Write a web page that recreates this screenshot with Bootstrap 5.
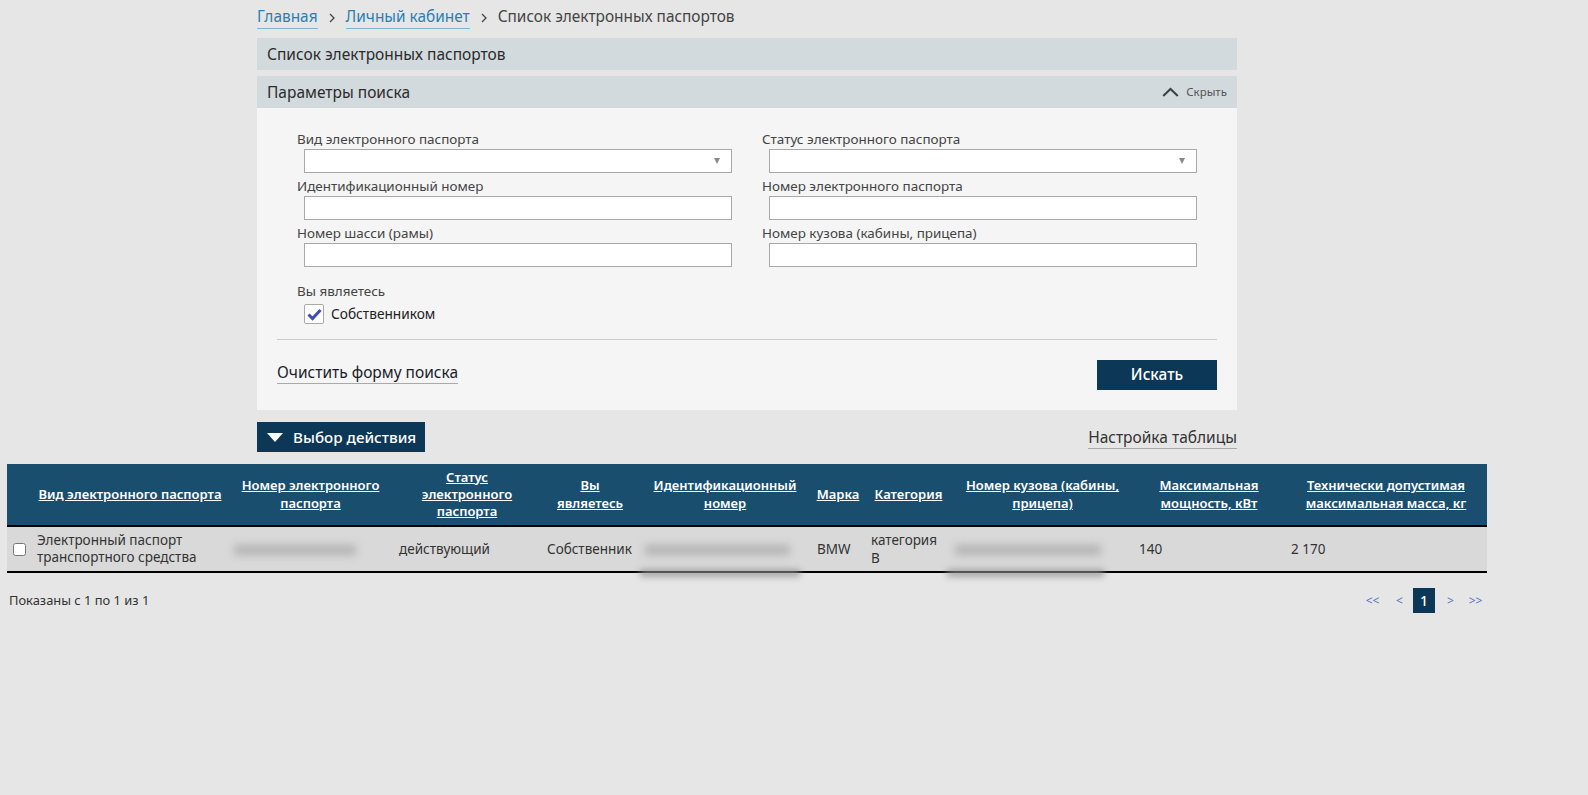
<!DOCTYPE html>
<html lang="ru">
<head>
<meta charset="utf-8">
<link href="https://cdn.jsdelivr.net/npm/bootstrap@5.3.0/dist/css/bootstrap.min.css" rel="stylesheet">
<style>
html,body{background:#e6e6e6;margin:0}
body{font-family:"Noto Sans","Open Sans",sans-serif;color:#333;font-size:13.5px;height:795px;overflow:hidden}
.wrap-main{width:980px;margin-left:257px}
.crumbs{height:38px;padding-top:6px;font-size:15.4px;line-height:22px;color:#444;gap:0}
.crumbs a{color:#2a7fb0;text-decoration:none;border-bottom:1px solid #7db4d6}
.crumbs .sep{width:28px;text-align:center}
.crumb-sep-svg{width:8px;height:10px}
.bar-head{height:32px;background:#d3dade;padding:2px 10px 0;font-size:15.5px;color:#2b2b2b}
.bar-head+.bar-head{margin-top:6px}
.hide-link{font-size:11.5px;color:#555;gap:7px;margin-top:-2px}
.panel-body{background:#f5f5f5;height:302px;padding:21px 20px 0}
.form-grid{display:grid;grid-template-columns:465px 465px;padding-left:1px}
.fld{height:47px;padding-left:19px}
.fld-label{font-size:13.45px;line-height:20px;height:20px;color:#444;padding-left:0}
.fld-box{display:block;margin-left:7px;width:428px;height:24px;background:#fff;border:1px solid #a9a9a9;position:relative}
.fld-box input{border:0;width:100%;height:100%;outline:0;background:transparent;display:block}
.arrow-down{position:absolute;right:11px;top:8px;border-left:3.5px solid transparent;border-right:3.5px solid transparent;border-top:6px solid #8a8a8a}
.owner-block{padding:11px 0 0 20px}
.owner-row{margin:3px 0 0 7px;gap:7px;color:#222;font-size:13.7px}
.owner-box{width:20px;height:20px;border:1px solid #a9a9a9;border-radius:2px;background:#fff;display:flex;align-items:center;justify-content:center}
.divider-line{border-top:1px solid #ccc;margin-top:14px}
.actions-row{margin-top:20px}
.clear-link{color:#1c1c2a;font-size:15.5px;line-height:22px;text-decoration:none;border-bottom:1px solid #aaa;margin-top:1px}
.search-btn{width:120px;height:30px;background:#0d3757;color:#fff;border:0;border-radius:0;font-size:15.4px;padding:0;font-weight:500}
.tools-row{margin-top:12px;height:30px}
.action-btn{width:168px;height:30px;background:#0d3757;color:#fff;border:0;border-radius:0;font-size:15.2px;font-weight:500;padding:0 0 0 10px;gap:10px}
.tri{border-left:8px solid transparent;border-right:8px solid transparent;border-top:9px solid #fff}
.setup-link{color:#333;font-size:15.5px;line-height:22px;text-decoration:none;border-bottom:1px solid #aaa;margin-top:4px}
.data-wrap{width:1480px;margin:12px 0 0 7px}
.data-tbl{table-layout:fixed;width:100%;border-collapse:separate;border-spacing:0;margin:0;font-size:13.5px}
.data-tbl th{background:#1a4e6e;color:#fff;text-align:center;vertical-align:middle;font-weight:600;font-size:13px;line-height:17.3px;height:63px;padding:0 5px;border-bottom:2px solid #000}
.data-tbl th a{color:#fff;text-decoration:underline}
.data-tbl td{background:#d9d9d9;height:46px;padding:1px 6px 0;vertical-align:middle;line-height:17.3px;color:#333;border-bottom:2px solid #000;position:relative}
.data-tbl td.cb-cell{padding:0 0 0 6px}
.data-tbl td.name-cell{padding:0 6px 0 5px}
.row-check{width:13px;height:13px;display:block;margin:0}
.smear{height:10px;background:#b3b3b3;filter:blur(4.5px)}
.smear-num{width:122px}
.smear-vin{width:145px}
.smear-body{width:146px;margin-left:-3px}
.smear-low{position:absolute;bottom:-5px;height:6px;background:#939393;filter:blur(3.5px)}
.low-vin{left:1px;width:160px}
.low-body{left:-5px;width:157px}
.foot-row{padding:15px 0 0 2px;height:40px}
.foot-info{font-size:12.9px;line-height:19px;color:#333;margin-top:3px}
.pager{gap:0}
.pager span{color:#5a6fc4;font-size:12px}
.pg-item{width:27px;text-align:center}
.pager .pg-next{margin-left:2px}
.pager .pg-last{width:23px}
.pg-cur{width:22px;height:25px;background:#0d3757;color:#fff;font-size:14px;font-weight:500;display:flex;align-items:center;justify-content:center}
</style>
</head>
<body>
<div class="wrap-main">
  <div class="crumbs d-flex align-items-start">
    <a href="#">Главная</a>
    <span class="sep"><svg class="crumb-sep-svg" viewBox="0 0 8 10"><path d="M2 1l4 4-4 4" fill="none" stroke="#444" stroke-width="1.3"/></svg></span>
    <a href="#">Личный кабинет</a>
    <span class="sep"><svg class="crumb-sep-svg" viewBox="0 0 8 10"><path d="M2 1l4 4-4 4" fill="none" stroke="#444" stroke-width="1.3"/></svg></span>
    <span>Список электронных паспортов</span>
  </div>
  <div class="bar-head d-flex align-items-center">Список электронных паспортов</div>
  <div class="bar-head d-flex align-items-center justify-content-between">
    <span>Параметры поиска</span>
    <span class="hide-link d-flex align-items-center"><svg width="17" height="10" viewBox="0 0 17 10"><path d="M1.2 9L8.5 2l7.3 7" fill="none" stroke="#3a4046" stroke-width="2"/></svg>Скрыть</span>
  </div>
  <div class="panel-body">
    <div class="form-grid">
      <div class="fld"><div class="fld-label">Вид электронного паспорта</div><div class="fld-box"><i class="arrow-down"></i></div></div>
      <div class="fld"><div class="fld-label">Статус электронного паспорта</div><div class="fld-box"><i class="arrow-down"></i></div></div>
      <div class="fld"><div class="fld-label">Идентификационный номер</div><div class="fld-box"><input type="text"></div></div>
      <div class="fld"><div class="fld-label">Номер электронного паспорта</div><div class="fld-box"><input type="text"></div></div>
      <div class="fld"><div class="fld-label">Номер шасси (рамы)</div><div class="fld-box"><input type="text"></div></div>
      <div class="fld"><div class="fld-label">Номер кузова (кабины, прицепа)</div><div class="fld-box"><input type="text"></div></div>
    </div>
    <div class="owner-block">
      <div class="fld-label">Вы являетесь</div>
      <div class="owner-row d-flex align-items-center"><span class="owner-box"><svg width="15" height="13" viewBox="0 0 15 13"><path d="M1.5 6.5l4 4L13.5 2" fill="none" stroke="#3f4db0" stroke-width="3"/></svg></span>Собственником</div>
    </div>
    <div class="divider-line"></div>
    <div class="actions-row d-flex justify-content-between align-items-start">
      <a class="clear-link" href="#">Очистить форму поиска</a>
      <button class="search-btn btn" type="button">Искать</button>
    </div>
  </div>
  <div class="tools-row d-flex justify-content-between align-items-start">
    <button class="action-btn btn d-flex align-items-center" type="button"><i class="tri"></i>Выбор действия</button>
    <a class="setup-link" href="#">Настройка таблицы</a>
  </div>
</div>
<div class="data-wrap">
  <table class="data-tbl table">
    <colgroup><col style="width:25px"><col style="width:196px"><col style="width:165px"><col style="width:148px"><col style="width:98px"><col style="width:172px"><col style="width:54px"><col style="width:87px"><col style="width:181px"><col style="width:152px"><col style="width:202px"></colgroup>
    <thead><tr>
      <th></th>
      <th><a href="#">Вид электронного паспорта</a></th>
      <th><a href="#">Номер электронного паспорта</a></th>
      <th><a href="#">Статус<br>электронного<br>паспорта</a></th>
      <th><a href="#">Вы<br>являетесь</a></th>
      <th><a href="#">Идентификационный номер</a></th>
      <th><a href="#">Марка</a></th>
      <th><a href="#">Категория</a></th>
      <th><a href="#">Номер кузова (кабины, прицепа)</a></th>
      <th><a href="#">Максимальная мощность, кВт</a></th>
      <th><a href="#">Технически допустимая максимальная масса, кг</a></th>
    </tr></thead>
    <tbody><tr>
      <td class="cb-cell"><input class="row-check" type="checkbox"></td>
      <td class="name-cell">Электронный паспорт транспортного средства</td>
      <td><div class="smear smear-num"></div></td>
      <td>действующий</td>
      <td>Собственник</td>
      <td><div class="smear smear-vin"></div><div class="smear-low low-vin"></div></td>
      <td>BMW</td>
      <td>категория B</td>
      <td><div class="smear smear-body"></div><div class="smear-low low-body"></div></td>
      <td>140</td>
      <td>2 170</td>
    </tr></tbody>
  </table>
  <div class="foot-row d-flex justify-content-between align-items-start">
    <div class="foot-info">Показаны с 1 по 1 из 1</div>
    <div class="pager d-flex align-items-center">
      <span class="pg-item">&lt;&lt;</span><span class="pg-item">&lt;</span><div class="pg-cur">1</div><span class="pg-item pg-next">&gt;</span><span class="pg-item pg-last">&gt;&gt;</span>
    </div>
  </div>
</div>
<script src="https://cdn.jsdelivr.net/npm/bootstrap@5.3.0/dist/js/bootstrap.bundle.min.js"></script>
</body>
</html>
